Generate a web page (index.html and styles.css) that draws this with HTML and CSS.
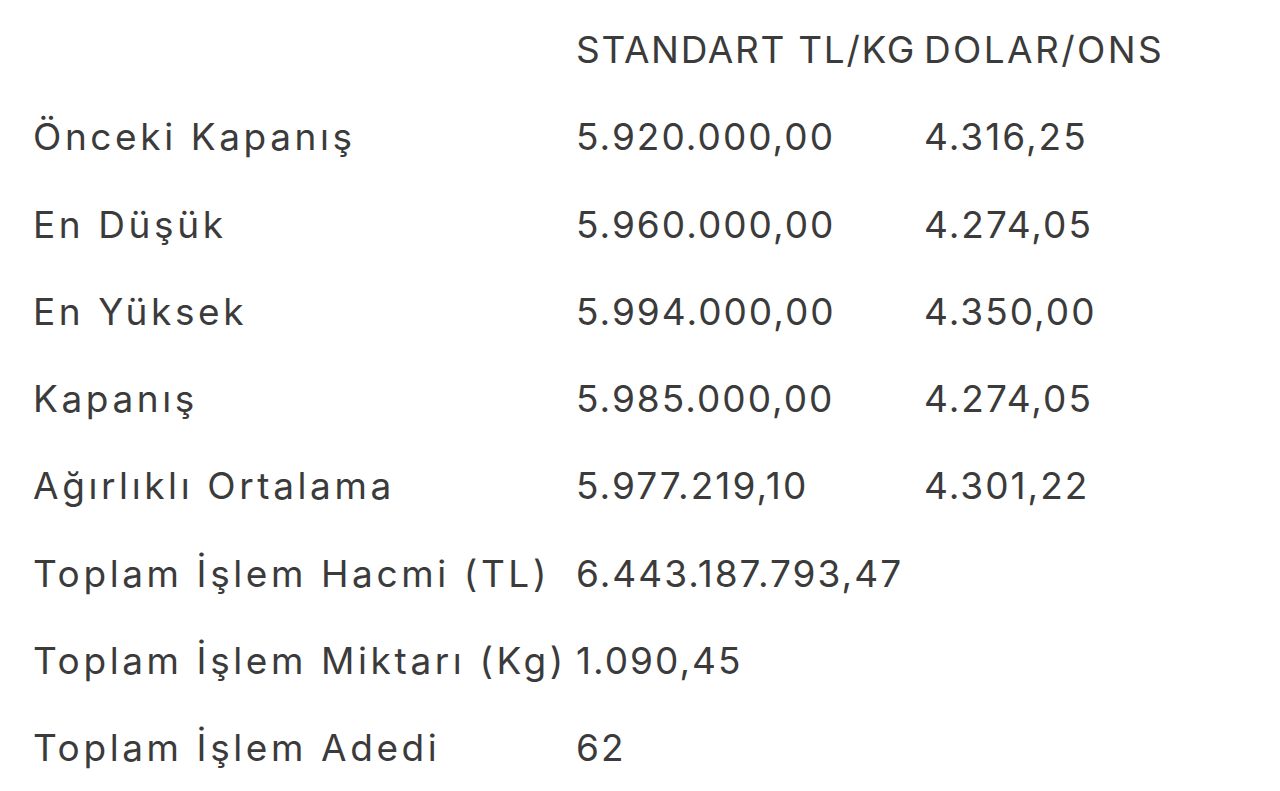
FILE: index.html
```html
<!DOCTYPE html>
<html lang="tr">
<head>
<meta charset="utf-8">
<link rel="stylesheet" href="styles.css">
</head>
<body>
<div class="wrap">
<table class="prices">
<colgroup><col class="c1"><col class="c2"><col class="c3"></colgroup>
<thead>
<tr><th></th><th class="hd">STANDART TL/KG</th><th class="hd">DOLAR/ONS</th></tr>
</thead>
<tbody>
<tr><td class="lbl">Önceki Kapanış</td><td>5.920.000,00</td><td>4.316,25</td></tr>
<tr><td class="lbl">En Düşük</td><td>5.960.000,00</td><td>4.274,05</td></tr>
<tr><td class="lbl">En Yüksek</td><td>5.994.000,00</td><td>4.350,00</td></tr>
<tr><td class="lbl">Kapanış</td><td>5.985.000,00</td><td>4.274,05</td></tr>
<tr><td class="lbl">Ağırlıklı Ortalama</td><td>5.977.219,10</td><td>4.301,22</td></tr>
<tr><td class="lbl">Toplam İşlem Hacmi (TL)</td><td>6.443.187.793,47</td><td></td></tr>
<tr><td class="lbl">Toplam İşlem Miktarı (Kg)</td><td>1.090,45</td><td></td></tr>
<tr><td class="lbl">Toplam İşlem Adedi</td><td>62</td><td></td></tr>
</tbody>
</table>
</div>
</body>
</html>
```
FILE: styles.css
```css
html, body {
  margin: 0;
  padding: 0;
  background: #ffffff;
}
body {
  font-family: "Inter", "Noto Sans", sans-serif;
  color: #3b3b3b;
}
.wrap {
  padding: 6px 0 0 33px;
}
.prices {
  border-collapse: collapse;
  table-layout: fixed;
  width: 1100px;
}
.c1 { width: 543px; }
.c2 { width: 348px; }
.c3 { width: 209px; }
.prices th,
.prices td {
  padding: 0;
  height: 87.3px;
  font-size: 37px;
  font-weight: 400;
  text-align: left;
  vertical-align: middle;
  white-space: nowrap;
  line-height: 87.3px;
  letter-spacing: 2px;
}
.prices .hd {
  letter-spacing: 1.7px;
}
.prices .hd + .hd {
  letter-spacing: 2.4px;
}
.prices .lbl {
  letter-spacing: 3.6px;
}
```
